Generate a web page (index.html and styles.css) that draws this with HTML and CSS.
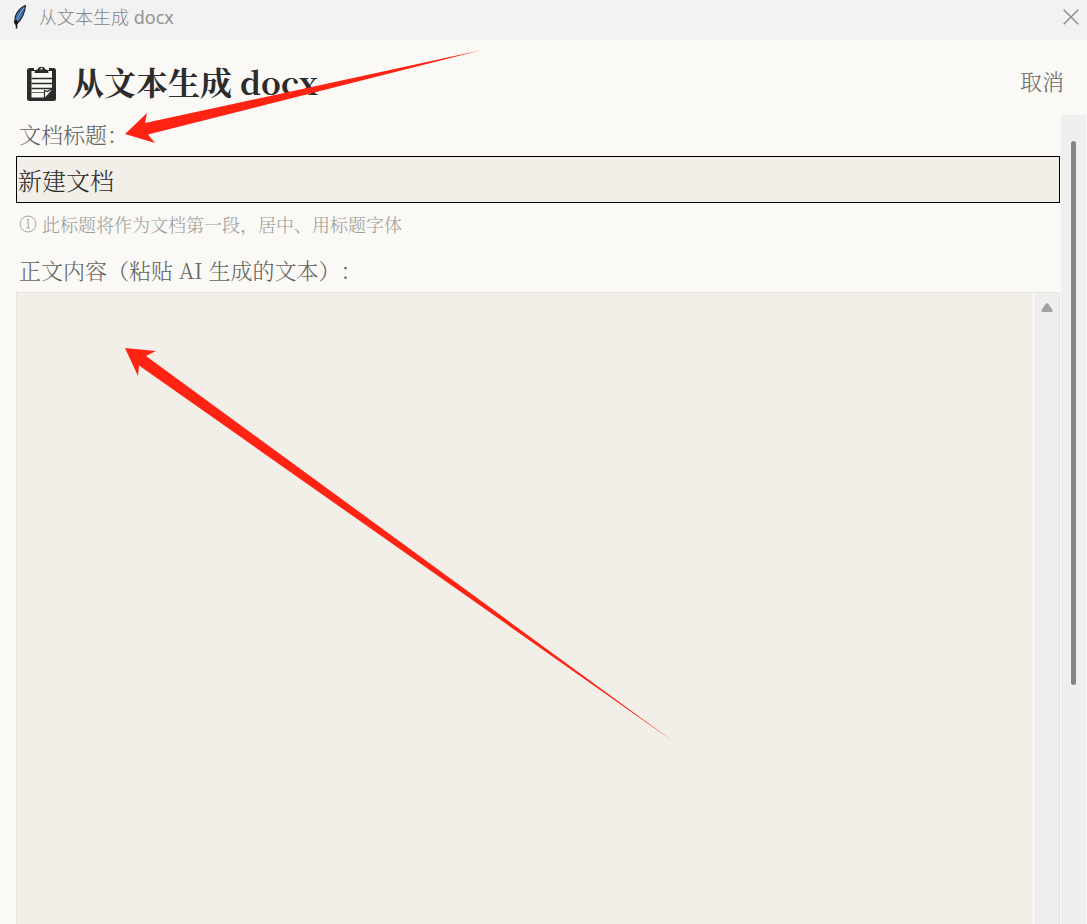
FILE: index.html
```html
<!DOCTYPE html>
<html lang="zh-CN">
<head>
<meta charset="utf-8">
<title>从文本生成 docx</title>
<link rel="stylesheet" href="styles.css">
</head>
<body>
<div class="window">
  <div class="titlebar">
    <svg class="feather" width="16" height="26" viewBox="0 0 16 26" aria-hidden="true">
      <path d="M13.500 1.500C9 3 4.500 8 3.200 13L3 19L5 19.500C9.500 16 12.500 10 13.500 1.500Z" fill="#3f6fa8" stroke="#20262e" stroke-width="1.200"/>
      <path d="M12 4C8.500 8 6.500 12 5 17" fill="none" stroke="#7fa3cb" stroke-width="1"/>
      <path d="M4.500 16V24.500M2.500 16.500L4 20.500L6 18" fill="none" stroke="#111" stroke-width="1.500"/>
    </svg>
    <span class="titlebar-text">从文本生成 <span class="titlebar-latin">docx</span></span>
    <button class="close" type="button" aria-label="关闭">
      <svg width="16" height="16" viewBox="0 0 16 16"><path d="M.7.700L15.300 15.300M15.300.700L.7 15.300" stroke="#868686" stroke-width="1.300"/></svg>
    </button>
  </div>
  <header class="header">
    <svg class="clipboard" width="30" height="36" viewBox="0 0 30 36" aria-hidden="true">
      <rect x="1" y="2" width="29" height="33" rx="2.500" fill="#2c2c2c"/>
      <path d="M8 1H23V4H8Z" fill="#faf9f5"/>
      <path d="M5.500 5H26V31.500H5.500Z" fill="#faf9f5"/>
      <path d="M8.500 7C8.500 4 11 3.500 12 3C12 0 19 0 19 3C20 3.500 22.500 4 22.500 7Z" fill="#2c2c2c"/>
      <circle cx="15.500" cy="2.800" r="1" fill="#faf9f5"/>
      <path d="M5.500 12.500H26M5.500 17.500H26M5.500 22.500H26" stroke="#2c2c2c" stroke-width="1.300"/>
      <path d="M5.500 26.500H18" stroke="#6a6a68" stroke-width="1"/>
      <path d="M18.500 32V24.500L21.500 25.500L26 22.500V24.500L19.500 32Z" fill="#faf9f5" stroke="#2c2c2c" stroke-width="1.200"/>
      <path d="M26.500 24.500V32H19.500Z" fill="#2c2c2c"/>
    </svg>
    <h1 class="heading">从文本生成 docx</h1>
    <button class="cancel" type="button">取消</button>
  </header>
  <div class="body">
    <main class="form">
      <label class="label" for="doc-title">文档标题：</label>
      <input class="title-input" id="doc-title" type="text" value="新建文档">
      <p class="hint">
        <svg width="18" height="18" viewBox="0 0 18 18" aria-hidden="true"><circle cx="9" cy="9" r="8" fill="none" stroke="#a8a8a5" stroke-width="1"/><path d="M7.500 7.500H9.300V13M7.500 13H11" fill="none" stroke="#a0a09d" stroke-width="1"/><circle cx="9" cy="5" r="1" fill="#a0a09d"/></svg>
        <span>此标题将作为文档第一段，居中、用标题字体</span>
      </p>
      <label class="label label-content" for="doc-content">正文内容（粘贴 AI 生成的文本）：</label>
      <div class="editor">
        <textarea class="content" id="doc-content"></textarea>
        <div class="editor-scroll">
          <svg width="12" height="9" viewBox="0 0 12 9" aria-hidden="true"><path d="M5 .6Q6 0 7 .6L11.500 7Q12 9 10.500 9H1.500Q0 9 .5 7Z" fill="#a2a2a2"/></svg>
        </div>
      </div>
    </main>
    <div class="page-scroll"><div class="thumb"></div></div>
  </div>
  <svg class="annotations" width="700" height="760" viewBox="0 0 700 760" aria-hidden="true">
    <path d="M125 134L147 113L145 123L482 50L148 134.500L155 143Z"/>
    <path d="M125 348L156 351L146 356L674 742L139 365.500L138 376Z"/>
  </svg>
</div>
</body>
</html>
```
FILE: styles.css
```css
* {
  box-sizing: border-box;
}

body {
  margin: 0;
  background: #faf9f5;
  font-family: "Noto Serif CJK SC", "Source Han Serif SC", "Liberation Serif", "Noto Sans CJK SC", serif;
  text-spacing-trim: space-all;
  color: #2c2c2c;
}

button {
  padding: 0;
  border: 0;
  background: none;
  font: inherit;
}

.window {
  position: relative;
  display: flex;
  flex-direction: column;
  height: 100vh;
  overflow: hidden;
}

.titlebar {
  display: flex;
  align-items: center;
  height: 40px;
  padding: 0 8px 6px 12px;
  background: #f2f2f2;
}

.feather {
  margin-right: 11px;
}

.titlebar-text {
  font: 300 18px/24px "Open Sans", "Noto Sans CJK SC", sans-serif;
  color: #868686;
}

.titlebar-latin {
  font-weight: 400;
  font-family: "Noto Sans", sans-serif;
  color: #929292;
}

.close {
  display: flex;
  margin-left: auto;
}

.header {
  display: flex;
  align-items: center;
  height: 75px;
  padding: 6px 23px 0 26px;
}

.clipboard {
  margin: 6px 16px 0 0;
}

.heading {
  margin: 0;
  font-size: 32px;
  line-height: 48px;
  font-weight: 700;
}

.cancel {
  margin-left: auto;
  font-size: 22px;
  line-height: 32px;
  font-weight: 300;
  color: #6b6b6b;
}

.body {
  display: flex;
  flex: 1;
  min-height: 0;
}

.form {
  display: flex;
  flex: 1;
  flex-direction: column;
  min-width: 0;
  padding: 3px 1px 0 16px;
}

.label {
  padding-left: 3px;
  font-size: 22px;
  line-height: 32px;
  font-weight: 300;
  color: #636363;
}

.title-input {
  width: 100%;
  height: 47px;
  margin-top: 6px;
  padding: 0 1px;
  border: 1px solid #000;
  border-radius: 0;
  outline: 0;
  background: #f2efe8;
  font: inherit;
  font-size: 24px;
  font-weight: 300;
  color: #2c2c2c;
}

.hint {
  display: flex;
  align-items: center;
  gap: 5px;
  margin: 8px 0 0;
  padding-left: 3px;
  font-size: 18px;
  line-height: 26px;
  font-weight: 300;
  color: #9b9b98;
}

.label-content {
  margin-top: 17px;
}

.editor {
  display: flex;
  flex: 1;
  min-height: 0;
  margin-top: 6px;
  border: 1px solid #e5e3dd;
  border-bottom: 0;
}

.content {
  flex: 1;
  padding: 8px;
  border: 0;
  outline: 0;
  resize: none;
  background: #f2efe8;
  font: inherit;
  font-size: 22px;
  color: #2c2c2c;
}

.editor-scroll {
  display: flex;
  justify-content: center;
  width: 26px;
  padding-top: 10px;
  border-left: 1px solid #fff;
  background: #efefef;
}

.page-scroll {
  width: 25px;
  margin-right: 1px;
  padding-top: 26px;
  background: #efefef;
}

.thumb {
  width: 5px;
  height: 69.500%;
  margin: 0 auto;
  border-radius: 3px;
  background: #868686;
}

.annotations {
  position: absolute;
  top: 0;
  left: 0;
  fill: #ff2314;
  pointer-events: none;
}
```
